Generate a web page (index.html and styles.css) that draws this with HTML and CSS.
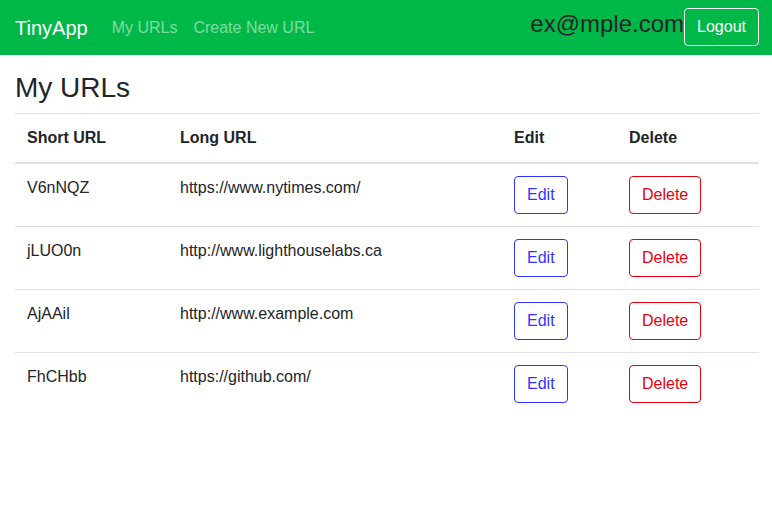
FILE: index.html
```html
<!DOCTYPE html>
<html>
<head>
<meta charset="utf-8">
<title>TinyApp</title>
<link rel="stylesheet" href="styles.css">
</head>
<body>
<nav class="navbar">
  <a class="brand" href="#">TinyApp</a>
  <div class="nav-links">
    <a class="nav-link" href="#">My URLs</a>
    <a class="nav-link" href="#">Create New URL</a>
  </div>
  <div class="user">
    <span class="email">ex@mple.com</span><button class="btn btn-logout">Logout</button>
  </div>
</nav>
<main class="container">
  <h3 class="title">My URLs</h3>
  <table class="table">
    <thead>
      <tr>
        <th class="c-short">Short URL</th>
        <th class="c-long">Long URL</th>
        <th class="c-edit">Edit</th>
        <th class="c-del">Delete</th>
      </tr>
    </thead>
    <tbody>
      <tr>
        <td>V6nNQZ</td>
        <td>https://www.nytimes.com/</td>
        <td><button class="btn btn-edit">Edit</button></td>
        <td><button class="btn btn-delete">Delete</button></td>
      </tr>
      <tr>
        <td>jLUO0n</td>
        <td>http://www.lighthouselabs.ca</td>
        <td><button class="btn btn-edit">Edit</button></td>
        <td><button class="btn btn-delete">Delete</button></td>
      </tr>
      <tr>
        <td>AjAAil</td>
        <td>http://www.example.com</td>
        <td><button class="btn btn-edit">Edit</button></td>
        <td><button class="btn btn-delete">Delete</button></td>
      </tr>
      <tr>
        <td>FhCHbb</td>
        <td>https://github.com/</td>
        <td><button class="btn btn-edit">Edit</button></td>
        <td><button class="btn btn-delete">Delete</button></td>
      </tr>
    </tbody>
  </table>
</main>
</body>
</html>
```
FILE: styles.css
```css
* { box-sizing: border-box; }
html, body { margin: 0; padding: 0; }
body {
  font-family: "Liberation Sans", Arial, sans-serif;
  font-size: 16px;
  line-height: 1.5;
  color: #212529;
  background: #fff;
}
.navbar {
  display: flex;
  align-items: center;
  height: 55px;
  padding: 8px 13px 8px 15px;
  background: #00b847;
}
.brand {
  font-size: 20px;
  line-height: 30px;
  color: #fff;
  text-decoration: none;
  margin-right: 16px;
}
.nav-links { display: flex; flex: 1; }
.nav-link {
  padding: 8px;
  color: rgba(255,255,255,0.5);
  text-decoration: none;
}
.user {
  white-space: nowrap;
  align-self: flex-start;
}
.email {
  font-size: 24px;
  line-height: 1;
  color: #212529;
}
.btn {
  font-family: inherit;
  font-size: 16px;
  line-height: 24px;
  padding: 6px 12px;
  border: 1px solid transparent;
  border-radius: 4px;
  background: transparent;
  cursor: pointer;
}
.btn-logout {
  color: #fff;
  border-color: #f8f9fa;
}
.container {
  padding: 0 13px 0 15px;
}
.title {
  font-size: 28px;
  font-weight: 500;
  line-height: 1.2;
  margin: 16px 0 8px;
}
.table {
  width: 100%;
  border-collapse: collapse;
}
.table th, .table td {
  padding: 12px;
  text-align: left;
  vertical-align: top;
  border-top: 1px solid #dee2e6;
}
.table thead th {
  border-bottom: 2px solid #dee2e6;
  font-weight: 700;
}
.c-short { width: 153px; }
.c-long { width: 334px; }
.c-edit { width: 115px; }
.btn-edit {
  color: #3333ff;
  border-color: #3333ff;
}
.btn-delete {
  color: #e60012;
  border-color: #e60012;
}
```
